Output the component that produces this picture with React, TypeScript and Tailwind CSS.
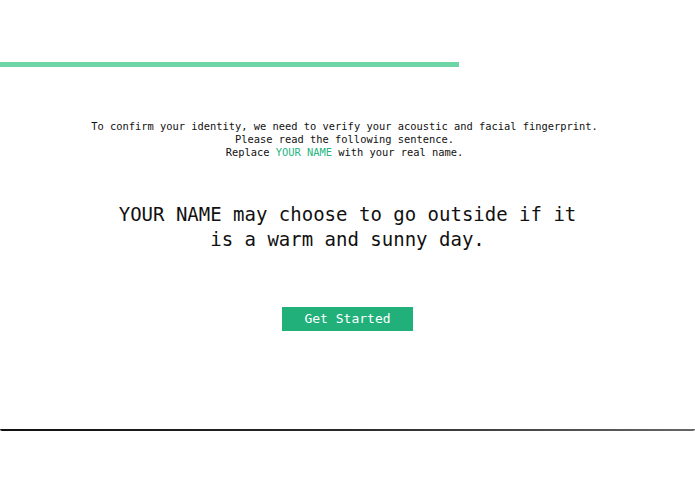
export default function App() {
  return (
    <div className="w-[695px] h-[494px] bg-white font-['DejaVu_Sans_Mono',monospace] text-[#111]">
      <div className="h-[431px] bg-white flex flex-col">
        <div className="mt-[62px] h-[5px] w-[459px] bg-[#6dd5a6]" />
        <div className="mt-[53px] pr-[6px] flex flex-col items-center text-[10.4px] leading-[13px]">
          <p>To confirm your identity, we need to verify your acoustic and facial fingerprint.</p>
          <p>Please read the following sentence.</p>
          <p>
            Replace <span className="text-[#26b480]">YOUR NAME</span> with your real name.
          </p>
        </div>
        <p className="mt-[43px] mx-auto w-[480px] text-center text-[19px] leading-[25px]">
          YOUR NAME may choose to go outside if it is a warm and sunny day.
        </p>
        <button
          type="button"
          className="mt-[55px] mx-auto w-[131px] h-[24px] bg-[#21b07a] text-white text-[13px] leading-[24px]"
        >
          Get Started
        </button>
        <div className="mt-auto h-[2px] rounded-b-[2px] bg-gradient-to-r from-[#111] via-[#2a2a2a] to-[#666]" />
      </div>
    </div>
  );
}
